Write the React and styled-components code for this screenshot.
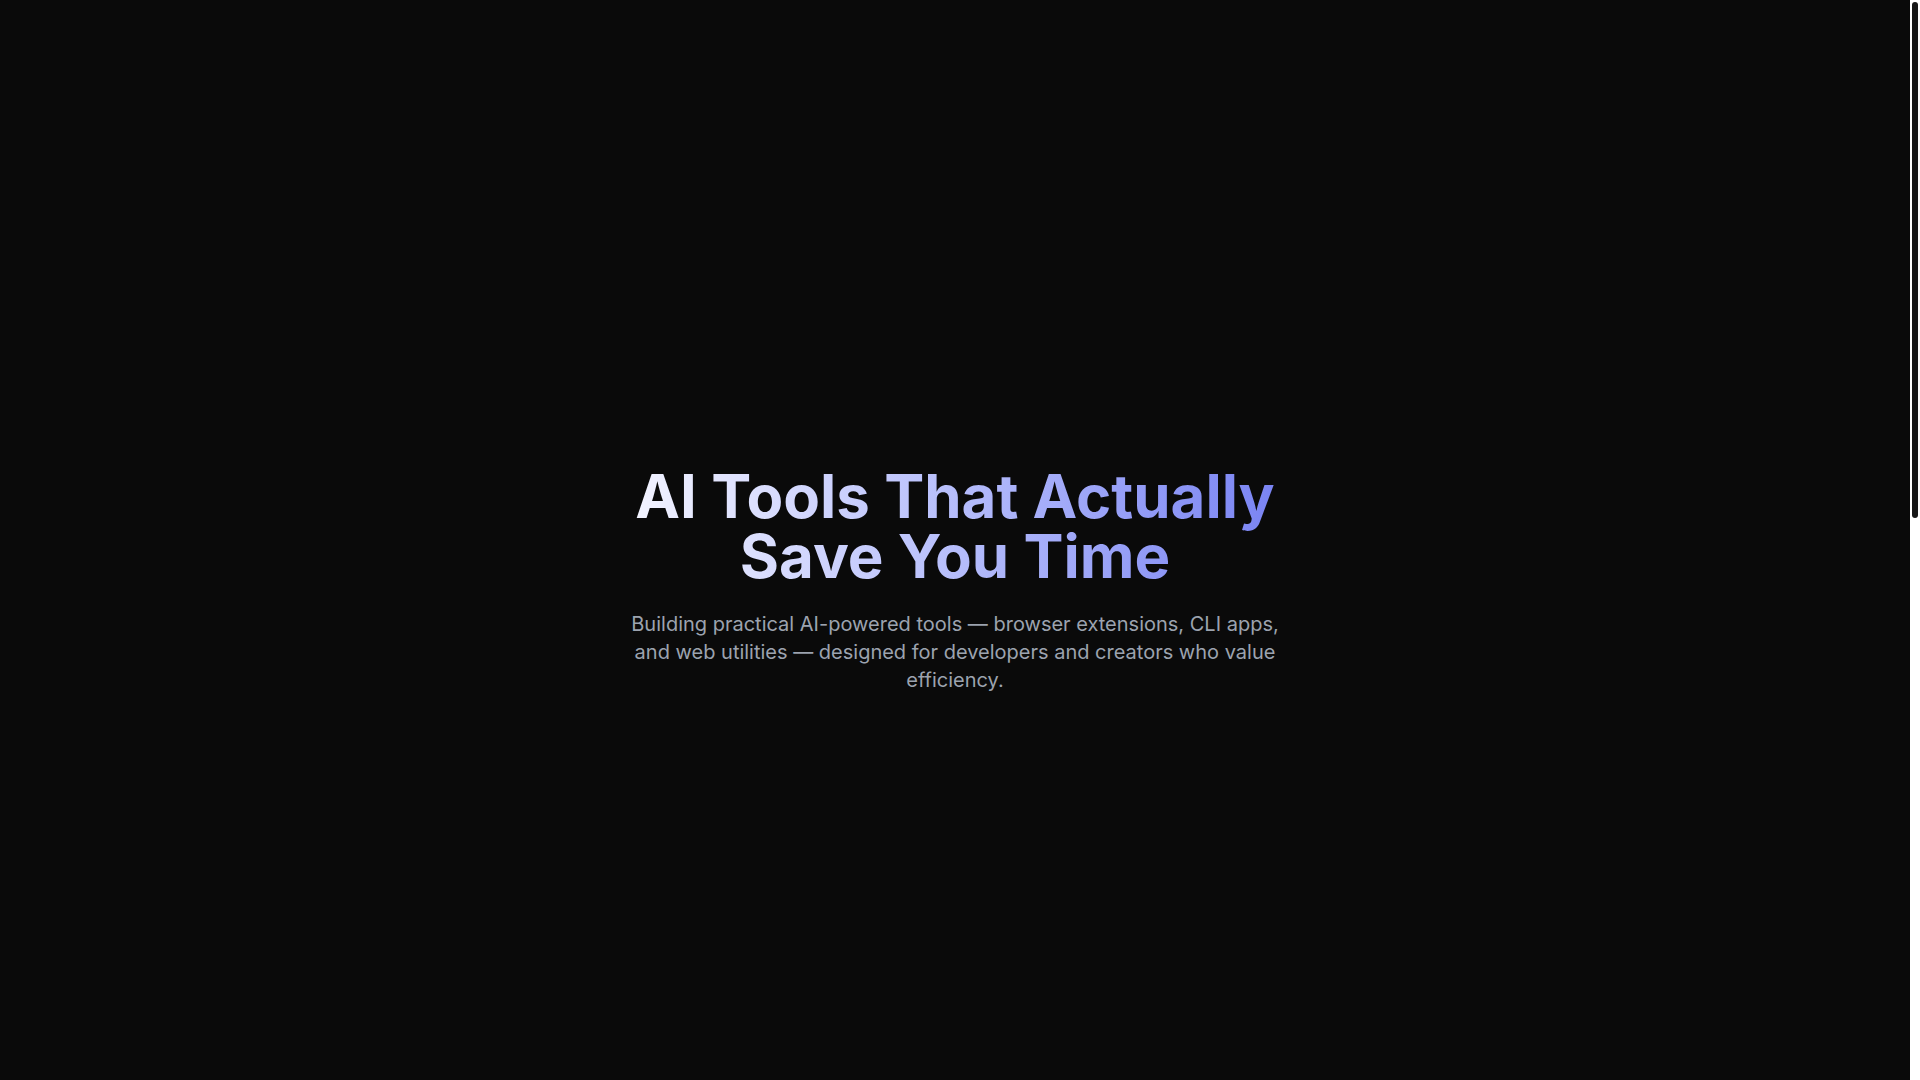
import React from 'react'
import styled, { createGlobalStyle } from 'styled-components'

const GlobalStyle = createGlobalStyle`
  * {
    box-sizing: border-box;
  }
  html,
  body {
    margin: 0;
    height: 100%;
    overflow: hidden;
    background: #0a0a0a;
  }
  body {
    color: #fff;
    font-family: Inter, "Noto Sans", "DejaVu Sans", sans-serif;
    -webkit-font-smoothing: antialiased;
  }
  #root {
    height: 100%;
  }
`

const Page = styled.main`
  height: 100vh;
  padding-right: 10px;
  overflow-y: auto;
  background: #0a0a0a;
  scrollbar-width: none;

  &::-webkit-scrollbar {
    display: none;
  }
`
// the window's scrollbar, drawn over the right edge
const Rail = styled.div`
  position: fixed;
  top: 0;
  right: 0;
  bottom: 0;
  width: 10px;
  padding: 2px;
  background: #ffffff;
`
const Thumb = styled.div`
  height: 516px;
  border-radius: 3px;
  background: #161616;
`
const Hero = styled.section`
  min-height: 100vh;
  padding: 80px 24px 0;
  display: flex;
  align-items: center;
  justify-content: center;
`
const Inner = styled.div`
  max-width: 896px;
  display: flex;
  flex-direction: column;
  align-items: center;
  text-align: center;
`
const Title = styled.h1`
  margin: 0 0 24px;
  font-size: 60px;
  line-height: 1;
  font-weight: 700;
`
const Gradient = styled.span`
  display: inline-block;
  background: linear-gradient(to right, #f2f3ff, #bcc3fc 45%, #7a84f3);
  -webkit-background-clip: text;
  background-clip: text;
  color: transparent;
`
const Lead = styled.p`
  margin: 0;
  max-width: 672px;
  font-size: 20px;
  line-height: 28px;
  color: #9ca3af;
`
const Below = styled.section`
  height: 1160px;
`

const App = () => {
  return (
    <Page>
      <GlobalStyle />
      <Hero>
        <Inner>
          <Title>
            <Gradient>
              AI Tools That Actually
              <br />
              Save You Time
            </Gradient>
          </Title>
          <Lead>
            Building practical AI-powered tools — browser extensions, CLI apps,
            and web utilities — designed for developers and creators who value
            efficiency.
          </Lead>
        </Inner>
      </Hero>
      <Below />
      <Rail>
        <Thumb />
      </Rail>
    </Page>
  )
}

export default App
